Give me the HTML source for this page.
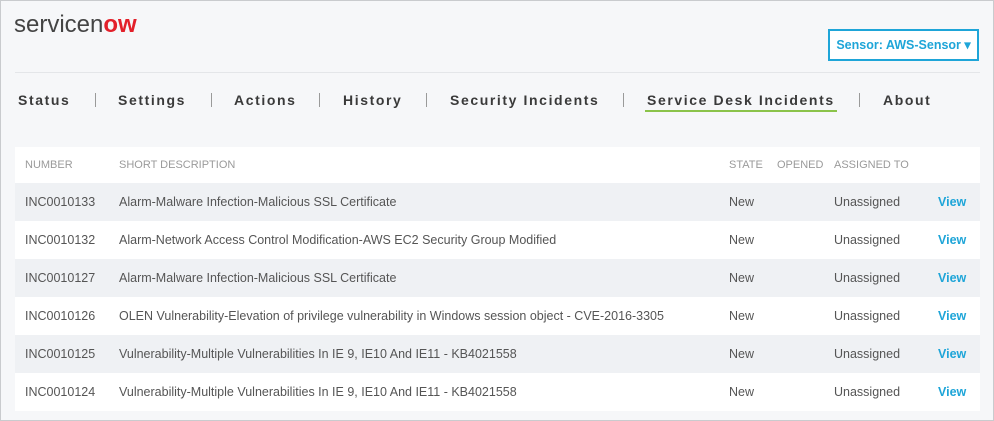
<html><head><style>
body{margin:0;width:994px;height:421px;overflow:hidden;background:#f6f7f9;font-family:"Liberation Sans",sans-serif;}
.frame{position:absolute;left:0;top:0;width:992px;height:419px;border:1px solid #c9cbce;}
.logo{position:absolute;left:14px;top:11px;font-size:24px;letter-spacing:0;color:#444;}
.logo b{color:#e3202a;font-weight:bold;}
.btn{position:absolute;left:828px;top:29px;width:147px;height:28px;border:2px solid #1ea5d8;background:#fff;color:#1ea5d8;font-weight:bold;font-size:12.5px;line-height:28px;text-align:center;}
.hr{position:absolute;left:15px;width:965px;height:1px;background:#e4e6e9;}
.nav{position:absolute;top:92px;font-size:14px;font-weight:bold;letter-spacing:1.6px;color:#3a3a3a;}
.sep{position:absolute;top:93px;width:1px;height:14px;background:#9a9a9a;}
.ul{position:absolute;left:645px;top:110px;width:192px;height:2px;background:#8bc34a;}
table{position:absolute;left:15px;top:147px;width:965px;border-collapse:collapse;font-size:12.5px;color:#555;}
td{height:38px;padding:0;}
tr.h td{height:36px;background:#fff;font-size:11px;color:#9a9a9a;}
tr.g td{background:#eff1f4;}
tr.w td{background:#fff;}
.v{color:#1ea5d8;font-weight:bold;}
</style></head><body>
<div class="frame"></div>
<div class="logo">servicen<b>o</b><b>w</b></div>
<div class="btn">Sensor: AWS-Sensor ▾</div>
<div class="hr" style="top:72px"></div>
<div class="nav" style="left:18px">Status</div>
<div class="sep" style="left:95px"></div>
<div class="nav" style="left:118px">Settings</div>
<div class="sep" style="left:211px"></div>
<div class="nav" style="left:234px">Actions</div>
<div class="sep" style="left:319px"></div>
<div class="nav" style="left:343px">History</div>
<div class="sep" style="left:426px"></div>
<div class="nav" style="left:450px">Security Incidents</div>
<div class="sep" style="left:623px"></div>
<div class="nav" style="left:647px">Service Desk Incidents</div>
<div class="sep" style="left:859px"></div>
<div class="nav" style="left:883px">About</div>
<div class="ul"></div>
<div class="hr" style="top:147px"></div>
<table>
<tr class="h"><td style="width:94px;padding-left:10px">NUMBER</td><td style="width:610px">SHORT DESCRIPTION</td><td style="width:48px">STATE</td><td style="width:57px">OPENED</td><td style="width:104px">ASSIGNED TO</td><td></td></tr>
<tr class="g"><td style="padding-left:10px">INC0010133</td><td>Alarm-Malware Infection-Malicious SSL Certificate</td><td>New</td><td></td><td>Unassigned</td><td class="v">View</td></tr>
<tr class="w"><td style="padding-left:10px">INC0010132</td><td>Alarm-Network Access Control Modification-AWS EC2 Security Group Modified</td><td>New</td><td></td><td>Unassigned</td><td class="v">View</td></tr>
<tr class="g"><td style="padding-left:10px">INC0010127</td><td>Alarm-Malware Infection-Malicious SSL Certificate</td><td>New</td><td></td><td>Unassigned</td><td class="v">View</td></tr>
<tr class="w"><td style="padding-left:10px">INC0010126</td><td>OLEN Vulnerability-Elevation of privilege vulnerability in Windows session object - CVE-2016-3305</td><td>New</td><td></td><td>Unassigned</td><td class="v">View</td></tr>
<tr class="g"><td style="padding-left:10px">INC0010125</td><td>Vulnerability-Multiple Vulnerabilities In IE 9, IE10 And IE11 - KB4021558</td><td>New</td><td></td><td>Unassigned</td><td class="v">View</td></tr>
<tr class="w"><td style="padding-left:10px">INC0010124</td><td>Vulnerability-Multiple Vulnerabilities In IE 9, IE10 And IE11 - KB4021558</td><td>New</td><td></td><td>Unassigned</td><td class="v">View</td></tr>
</table>
</body></html>
